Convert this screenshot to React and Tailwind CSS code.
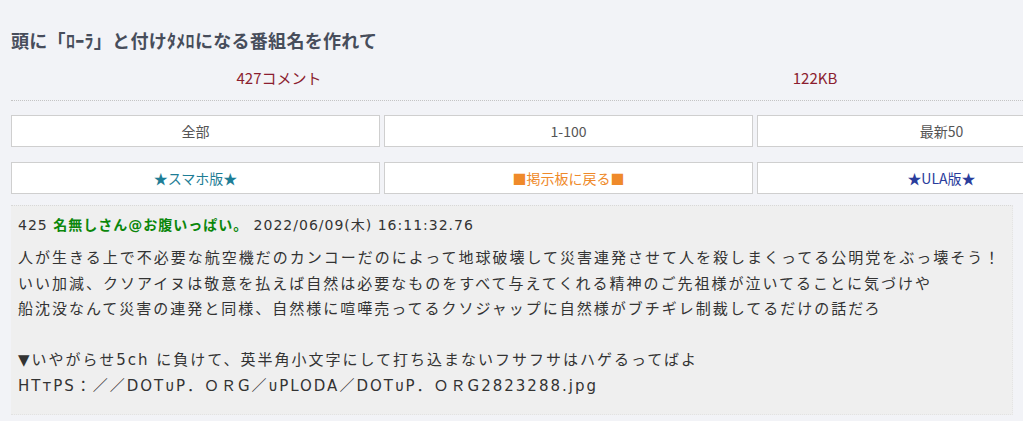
import React from 'react'

const font = { fontFamily: '"Noto Sans CJK JP", "Noto Sans", sans-serif' }
const latinFirst = { fontFamily: '"DejaVu Sans", "Noto Sans CJK JP", sans-serif' }

function NavButton({ children, className }) {
    return (
        <a className={"flex items-center justify-center w-[369px] h-[32px] shrink-0 bg-white border border-[#cfcfcf] text-[14px] " + className}>
            {children}
        </a>
    )
}

function App() {
    return (
        <div className="min-h-screen bg-[#f2f3f7] overflow-hidden" style={font}>
            <div className="pt-[27px] pl-[11px]">
                <h1 className="text-[18px] leading-[26px] font-bold tracking-[0.3px] text-[#474d5b]">
                    頭に「ﾛｰﾗ」と付けﾀﾒﾛになる番組名を作れて
                </h1>
                <div className="flex w-[1072px] mt-[15px] text-[15px] leading-[20px] text-[#8b1d2f]">
                    <div className="w-[536px] text-center">427コメント</div>
                    <div className="w-[536px] text-center">122KB</div>
                </div>
                <div className="mt-[12px] border-b border-dotted border-[#c4c4c4]"></div>

                <div className="flex gap-[4px] mt-[14px]">
                    <NavButton className="text-[#555]">全部</NavButton>
                    <NavButton className="text-[#555]">1-100</NavButton>
                    <NavButton className="text-[#555]">最新50</NavButton>
                </div>
                <div className="flex gap-[4px] mt-[15px]">
                    <NavButton className="text-[#1e7d96]">★スマホ版★</NavButton>
                    <NavButton className="text-[#ef8a2a]">■掲示板に戻る■</NavButton>
                    <NavButton className="text-[#2a3d9c]">★ULA版★</NavButton>
                </div>

                <div className="mt-[11px] mr-[10px] bg-[#efefef] border-t border-dotted border-[#d8d8d8] border-b-[#e2e2e2] border-b border-r border-r-[#e4e4e4] pl-[7px] pt-[9px] pb-[15px]">
                    <div className="text-[14px] leading-[20px] tracking-[1px] text-[#333]" style={latinFirst}>
                        425 <span className="font-bold text-[#0b870b]">名無しさん@お腹いっぱい。</span> 2022/06/09(木) 16:11:32.76
                    </div>
                    <div className="mt-[11px] text-[15px] leading-[25.5px] tracking-[2px] text-[#333]" style={latinFirst}>
                        人が生きる上で不必要な航空機だのカンコーだのによって地球破壊して災害連発させて人を殺しまくってる公明党をぶっ壊そう！<br />
                        いい加減、クソアイヌは敬意を払えば自然は必要なものをすべて与えてくれる精神のご先祖様が泣いてることに気づけや<br />
                        船沈没なんて災害の連発と同様、自然様に喧嘩売ってるクソジャップに自然様がブチギレ制裁してるだけの話だろ<br />
                        <br />
                        ▼いやがらせ5ch に負けて、英半角小文字にして打ち込まないフサフサはハゲるってばよ<br />
                        HTтPS：／／DOTᴜP．ＯＲG／ᴜPLODA／DOTᴜP．ＯＲG2823288.jpg
                    </div>
                </div>
            </div>
        </div>
    )
}

export default App
